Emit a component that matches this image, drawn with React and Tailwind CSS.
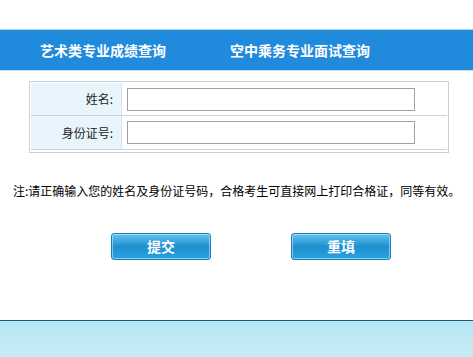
import React from "react";

const cjk = { fontFamily: '"Noto Sans CJK SC", sans-serif' };

function Row({ label, last }) {
  return (
    <div className={`flex h-[33px] ${last ? "" : "border-b border-[#c9d5dc]"}`}>
      <div className="w-[90px] bg-[#e9f5fd] flex items-center justify-end pr-[8px] text-[12px] text-[#222]">
        {label}
      </div>
      <div className="w-px bg-[#d8e4ea]" />
      <div className="flex-1 flex items-center pl-[5px]">
        <input className="w-[288px] h-[23px] border border-[#a0a0a0] bg-white outline-none" />
      </div>
    </div>
  );
}

export default function App() {
  return (
    <div className="w-[473px] h-[357px] bg-white flex flex-col overflow-hidden" style={cjk}>
      <div className="h-[29px]" />

      {/* top nav */}
      <div className="h-[42px] bg-[#208adc] border-t border-[#a9d5f5] border-b border-b-[#bfe0f8] flex items-center text-white font-bold text-[14px]">
        <span className="ml-[40px]">艺术类专业成绩查询</span>
        <span className="ml-[64px]">空中乘务专业面试查询</span>
      </div>

      {/* form */}
      <div className="ml-[29px] mt-[10px] w-[420px] border border-[#c3d2db] p-px pb-[2px]">
        <Row label="姓名:" />
        <Row label="身份证号:" last />
        <div className="border-t border-[#c9d5dc]" />
      </div>

      <div className="mt-[31px] ml-[13px] text-[12px] text-black leading-[14px]">
        注:请正确输入您的姓名及身份证号码，合格考生可直接网上打印合格证，同等有效。
      </div>

      <div className="mt-[35px] flex">
        <button className="ml-[111px] w-[100px] h-[27px] rounded-[3px] border border-[#1a7fbf] bg-gradient-to-b from-[#5fc4f0] via-[#1e8fd0] to-[#2aa3e0] shadow-[inset_0_0_0_1px_rgba(255,255,255,0.45)] text-white font-bold text-[14px]">
          提交
        </button>
        <button className="ml-[80px] w-[100px] h-[27px] rounded-[3px] border border-[#1a7fbf] bg-gradient-to-b from-[#5fc4f0] via-[#1e8fd0] to-[#2aa3e0] shadow-[inset_0_0_0_1px_rgba(255,255,255,0.45)] text-white font-bold text-[14px]">
          重填
        </button>
      </div>

      <div className="mt-auto h-[37px] border-t border-[#215a7c] bg-gradient-to-b from-[#b3e7f5] to-[#c8ebf4]" />
    </div>
  );
}
